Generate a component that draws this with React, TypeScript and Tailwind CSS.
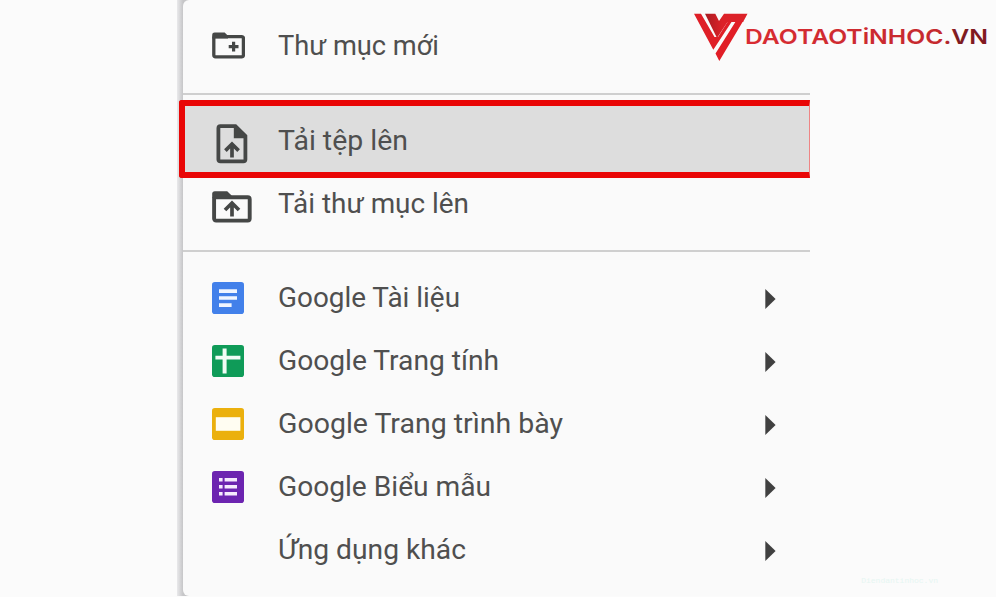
import type { ReactNode } from "react";
import clsx from "clsx";

function NewFolderIcon() {
    return (
        <svg width="33" height="27" viewBox="0 0 33 27" fill="none">
            <rect x="1.8" y="4.6" width="29.6" height="20.2" rx="1.8" stroke="#454746" strokeWidth="3.3" />
            <path d="M0.2 6V2.8Q0.2 0.4 2.6 0.4H12.6L16 3.8V6.4H0.2Z" fill="#454746" />
            <path d="M21.6 9.8V19.6M16.7 14.7H26.5" stroke="#454746" strokeWidth="3.2" />
        </svg>
    );
}

function UploadFileIcon() {
    return (
        <svg width="32" height="40" viewBox="0 0 32 40" fill="none">
            <path
                d="M4.4 2.2H19.4L29.4 12V35.6Q29.4 37.4 27.4 37.4H4.4Q2.4 37.4 2.4 35.4V4.2Q2.4 2.2 4.4 2.2Z"
                stroke="#454746"
                strokeWidth="3.8"
            />
            <path d="M17.8 1.5H20.4L31 11.6V14.2H17.8Z" fill="#454746" />
            <path d="M16 33.6V21M9.4 26.6L16 20L22.6 26.6" stroke="#454746" strokeWidth="3.7" />
        </svg>
    );
}

function UploadFolderIcon() {
    return (
        <svg width="40" height="32" viewBox="0 0 40 32" fill="none">
            <rect x="2.1" y="6.2" width="35.6" height="23.4" rx="2" stroke="#454746" strokeWidth="3.9" />
            <path d="M0.2 7V2.8Q0.2 0.2 2.8 0.2H15.2L19.6 4.6V7.4H0.2Z" fill="#454746" />
            <path d="M20 25.4V13M13 19L20 12L27 19" stroke="#454746" strokeWidth="3.7" />
        </svg>
    );
}

function DocsIcon() {
    return (
        <svg width="32" height="32" viewBox="0 0 32 32">
            <rect width="32" height="32" rx="2.8" fill="#4280ea" />
            <path d="M7 7.2H25V11H7ZM7 14.2H25V17.8H7ZM7 21.2H19.6V25H7Z" fill="#f0f5ff" />
        </svg>
    );
}

function SheetsIcon() {
    return (
        <svg width="32" height="32" viewBox="0 0 32 32">
            <rect width="32" height="32" rx="2.8" fill="#0f9b58" />
            <path d="M10.6 3.6H14.6V10.8H28.4V14.6H14.6V28.4H10.6V14.6H3.4V10.8H10.6Z" fill="#f0fcf5" />
        </svg>
    );
}

function SlidesIcon() {
    return (
        <svg width="32" height="32" viewBox="0 0 32 32">
            <rect width="32" height="32" rx="2.8" fill="#ebb00d" />
            <rect x="3.8" y="9.2" width="24.6" height="13.6" fill="#fffdf2" />
        </svg>
    );
}

function FormsIcon() {
    return (
        <svg width="32" height="32" viewBox="0 0 32 32">
            <rect width="32" height="32" rx="2.8" fill="#6c24b0" />
            <path
                d="M7 7H10.6V10.6H7ZM12.6 7H25V10.6H12.6ZM7 14H10.6V17.6H7ZM12.6 14H25V17.6H12.6ZM7 21H10.6V24.6H7ZM12.6 21H25V24.6H12.6Z"
                fill="#f5eafd"
            />
        </svg>
    );
}

type MenuItemProps = {
    label: string;
    width: number;
    icon?: ReactNode;
    iconClassName?: string;
    hasSubmenu?: boolean;
    isActive?: boolean;
};

function MenuItem({ label, width, icon, iconClassName, hasSubmenu, isActive }: MenuItemProps) {
    return (
        <li className="relative flex h-[63px] items-center pl-[29px] pr-[34px]">
            {isActive && (
                <span className="absolute -bottom-1.5 -left-1 -top-[9px] right-0 rounded-l-[3px] border-y-[6px] border-l-[6px] border-r border-y-[#e90606] border-l-[#e90606] border-r-[#ee8585] bg-[#dddddd]" />
            )}
            <span className={clsx("relative flex w-[65px] shrink-0 items-center", iconClassName)}>{icon}</span>
            <svg width={width} height="40" className="relative shrink-0 overflow-visible">
                <text
                    x="1"
                    y="29"
                    textLength={width}
                    lengthAdjust="spacingAndGlyphs"
                    fontSize="28"
                    fill="#4f4f4f"
                >
                    {label}
                </text>
            </svg>
            {hasSubmenu && (
                <svg width="11" height="20" viewBox="0 0 11 20" className="ml-auto mt-[3px]">
                    <path d="M0.3 0L10.6 10L0.3 20Z" fill="#404040" />
                </svg>
            )}
        </li>
    );
}

const menuGroups: MenuItemProps[][] = [
    [{ label: "Thư mục mới", width: 161, icon: <NewFolderIcon /> }],
    [
        {
            label: "Tải tệp lên",
            width: 130,
            icon: <UploadFileIcon />,
            iconClassName: "pl-1 pt-[7px]",
            isActive: true,
        },
        { label: "Tải thư mục lên", width: 191, icon: <UploadFolderIcon />, iconClassName: "pt-[7px]" },
    ],
    [
        { label: "Google Tài liệu", width: 182, icon: <DocsIcon />, hasSubmenu: true },
        { label: "Google Trang tính", width: 221, icon: <SheetsIcon />, hasSubmenu: true },
        { label: "Google Trang trình bày", width: 285, icon: <SlidesIcon />, hasSubmenu: true },
        { label: "Google Biểu mẫu", width: 213, icon: <FormsIcon />, hasSubmenu: true },
        { label: "Ứng dụng khác", width: 188, hasSubmenu: true },
    ],
];

function Logo() {
    return (
        <svg width="302" height="56" viewBox="0 0 302 56" className="absolute right-1 top-2">
            <defs>
                <linearGradient id="wordmark" x1="0" x2="1">
                    <stop offset="0" stopColor="#d92c32" />
                    <stop offset="0.82" stopColor="#c4292e" />
                    <stop offset="0.87" stopColor="#7d1b20" />
                    <stop offset="1" stopColor="#821a20" />
                </linearGradient>
                <linearGradient id="fold" x1="0" x2="1">
                    <stop offset="0" stopColor="#a81c22" />
                    <stop offset="0.4" stopColor="#dc2128" />
                </linearGradient>
            </defs>
            <path d="M15 5.7H25.3L29 13L34 5.7H57.5L53 14H37.5L27 30Z" fill="url(#fold)" />
            <path d="M4 5.7H11L24.5 29L28 29L37.5 14H41.5L23.3 41.8Z" fill="#df1f27" />
            <path d="M53 13.5L57.5 5.7L29.3 53L25.5 45.5L46 13H54Z" fill="#e11e26" />
            <text
                x="55"
                y="35.6"
                textLength="243"
                lengthAdjust="spacingAndGlyphs"
                fontSize="20.5"
                fontWeight="600"
                fontFamily="Inter, sans-serif"
                fill="url(#wordmark)"
            >
                DAOTAOTiNHOC.VN
            </text>
        </svg>
    );
}

export default function App() {
    return (
        <main className="relative flex h-[597px] w-[996px] overflow-hidden bg-[#fbfbfb] pl-[177px] font-['Roboto',sans-serif]">
            {/* left padding doubles as the panel's side shadow */}
            <div className="h-[596px] w-[633px] bg-linear-to-r from-[#e9e9eb] from-0% to-[#c6c6c8] to-[6px] pl-1.5">
                <nav className="flex h-full flex-col rounded-l-[6px] bg-[#fafafa]">
                    {menuGroups.map((group, i) => (
                        <ul
                            key={i}
                            className={clsx(
                                i === 0 ? "pb-4 pt-3.5" : "border-t-2 border-[#cfcfcf] pt-3.5",
                                i === 1 && "pb-[15px]",
                            )}
                        >
                            {group.map((item) => (
                                <MenuItem key={item.label} {...item} />
                            ))}
                        </ul>
                    ))}
                </nav>
            </div>

            <Logo />
            <span className="absolute bottom-2.5 right-[58px] font-['Liberation_Mono'] text-[8px] text-[#e6f6f2]">
                Diendantinhoc.vn
            </span>
        </main>
    );
}
